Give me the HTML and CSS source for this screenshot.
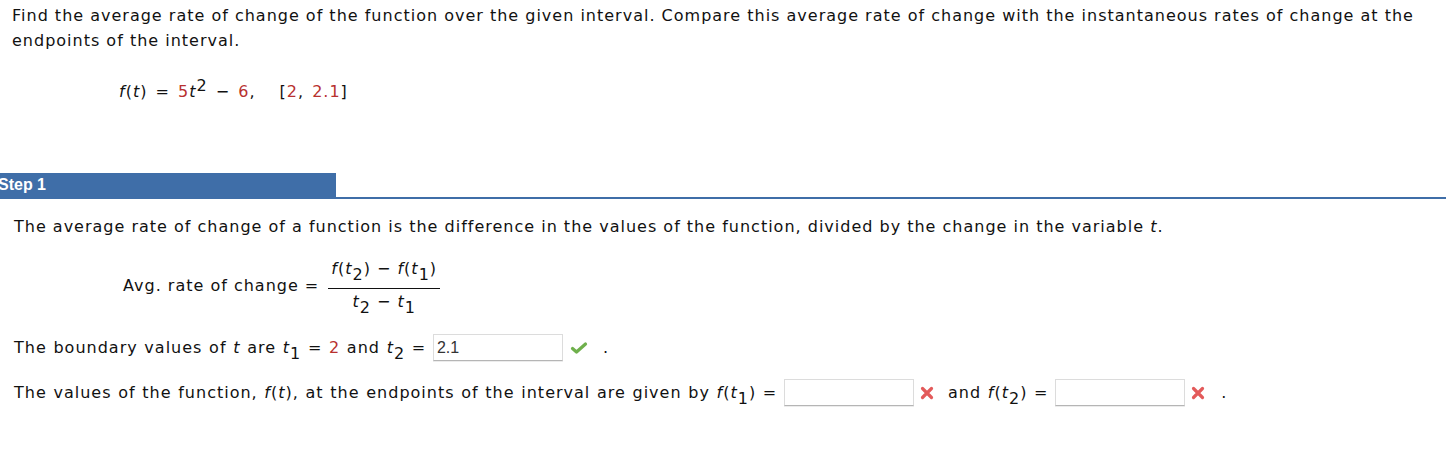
FILE: index.html
```html
<!DOCTYPE html>
<html>
<head>
<meta charset="utf-8">
<link rel="stylesheet" href="styles.css">
</head>
<body>
<div class="question">
  <p class="prompt">Find the average rate of change of the function over the given interval. Compare this average rate of change with the instantaneous rates of change at the<br>endpoints of the interval.</p>
  <p class="given"><i>f</i>(<i>t</i>) = <span class="red">5</span><i>t</i><span class="sup">2</span> &minus; <span class="red">6</span>,<span class="gap"></span>[<span class="red">2</span>, <span class="red">2.1</span>]</p>
</div>
<div class="step-head"><span class="step-label">Step 1</span></div>
<div class="step-body">
  <p class="para">The average rate of change of a function is the difference in the values of the function, divided by the change in the variable <i>t</i>.</p>
  <div class="avg">
    <span class="avg-label">Avg. rate of change =</span>
    <span class="frac">
      <span class="num"><i>f</i>(<i>t</i><span class="sub">2</span>) &minus; <i>f</i>(<i>t</i><span class="sub">1</span>)</span>
      <span class="den"><i>t</i><span class="sub">2</span> &minus; <i>t</i><span class="sub">1</span></span>
    </span>
  </div>
  <p class="line first">The boundary values of <i>t</i> are <i>t</i><span class="sub">1</span> = <span class="red">2</span> and <i>t</i><span class="sub">2</span> = <span class="field">2.1</span><svg class="mark check" width="18" height="14" viewBox="0 0 18 14"><path d="M2.5 7.5 L6.5 11 L15.5 3" fill="none" stroke="#6fb04c" stroke-width="3.2" stroke-linecap="round" stroke-linejoin="round"/></svg><span class="dot">.</span></p>
  <p class="line second">The values of the function, <i>f</i>(<i>t</i>), at the endpoints of the interval are given by <i>f</i>(<i>t</i><span class="sub">1</span>) = <span class="field"></span><svg class="mark x" width="14" height="14" viewBox="0 0 14 14"><path d="M2.5 2.5 L11.5 11.5 M11.5 2.5 L2.5 11.5" fill="none" stroke="#e35a5a" stroke-width="3.2" stroke-linecap="round"/></svg><span class="and">and <i>f</i>(<i>t</i><span class="sub">2</span>) = </span><span class="field"></span><svg class="mark x" width="14" height="14" viewBox="0 0 14 14"><path d="M2.5 2.5 L11.5 11.5 M11.5 2.5 L2.5 11.5" fill="none" stroke="#e35a5a" stroke-width="3.2" stroke-linecap="round"/></svg><span class="dot">.</span></p>
</div>
</body>
</html>
```
FILE: styles.css
```css
html, body {
  margin: 0;
  padding: 0;
  background: #fff;
}
body {
  font-family: "DejaVu Sans", Verdana, sans-serif;
  font-size: 16px;
  letter-spacing: 1px;
  color: #111;
  overflow: hidden;
}
p { margin: 0; }
.red { color: #b8312f; }
.question {
  padding: 3px 0 0 12px;
}
.prompt {
  line-height: 25px;
  white-space: nowrap;
}
.given {
  margin: 27px 0 0 107px;
  line-height: 24px;
  word-spacing: 2px;
}
.gap { display: inline-block; width: 24px; }
.sup {
  vertical-align: 6px;
  line-height: 0;
}
.sub {
  vertical-align: -6px;
  line-height: 0;
}
.step-head {
  margin-top: 69px;
  border-bottom: 2px solid #3f6ea8;
  display: flex;
}
.step-label {
  width: 338px;
  margin-left: -2px;
  height: 24px;
  line-height: 24px;
  background: #3f6ea8;
  color: #fff;
  font-weight: bold;
  font-family: "Liberation Sans", Arial, sans-serif;
  font-size: 16px;
  letter-spacing: 0;
}
.step-body {
  padding: 0 14px;
}
.para {
  margin-top: 16px;
  line-height: 24px;
}
.avg {
  margin: 20px 0 0 109px;
  display: flex;
  align-items: flex-start;
}
.avg-label {
  line-height: 20px;
  margin-top: 17px;
  margin-right: 9px;
}
.frac {
  display: inline-flex;
  flex-direction: column;
  align-items: center;
}
.num {
  line-height: 20px;
  padding: 0 3px 9px 3px;
  border-bottom: 1.5px solid #111;
}
.den {
  line-height: 20px;
  padding-top: 3px;
}
.line {
  line-height: 28px;
  white-space: nowrap;
  word-spacing: 0.6px;
}
.line.first { margin-top: 22px; }
.line.second { margin-top: 17px; }
.field {
  display: inline-block;
  vertical-align: middle;
  width: 125px;
  height: 25px;
  margin-top: -2px;
  border: 1px solid #dcdcdc;
  border-bottom-color: #b5b5b5;
  box-shadow: 0 1px 0 #ececec;
  font-family: "Liberation Sans", Arial, sans-serif;
  font-size: 16px;
  letter-spacing: 0;
  word-spacing: 0;
  line-height: 26px;
  padding-left: 3px;
  color: #333;
}
.second .field:first-of-type { margin-left: -1px; }
.mark {
  vertical-align: middle;
  margin-top: -2px;
}
.mark.check { margin-left: 7px; }
.mark.x { margin-left: 6px; margin-right: 14px; }
.dot { margin-left: 15px; }
.second .dot { margin-left: 2px; }
```
